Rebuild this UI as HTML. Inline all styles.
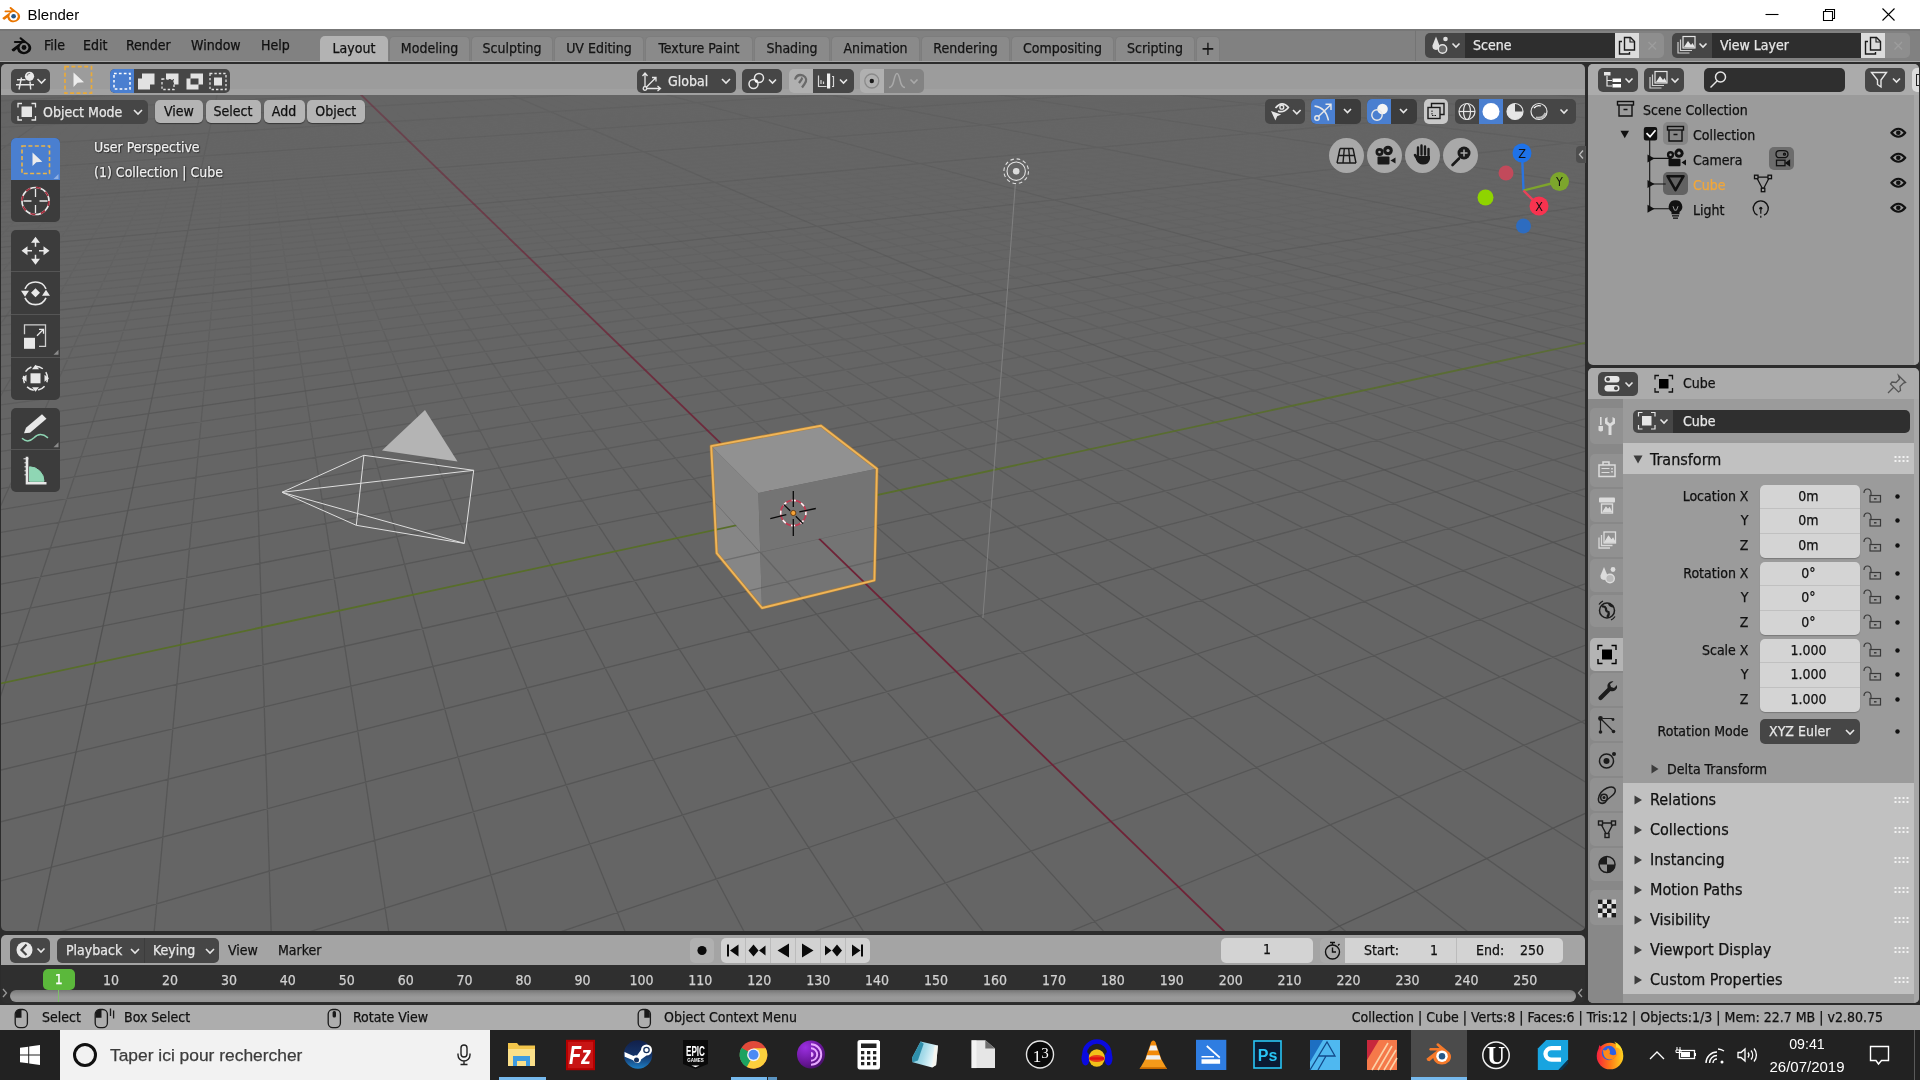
<!DOCTYPE html>
<html lang="en"><head><meta charset="utf-8"><title>Blender</title>
<style>
*{box-sizing:border-box;margin:0;padding:0}
html,body{width:1920px;height:1080px;overflow:hidden;background:#818181}
body{position:relative;font-family:"DejaVu Sans Condensed","DejaVu Sans",sans-serif;font-stretch:condensed;font-size:14px;color:#111;line-height:1}
.a{position:absolute}
.t{position:absolute;white-space:nowrap;line-height:20px;height:20px}
.w{font-family:"Liberation Sans",sans-serif}
.btn{position:absolute;border-radius:5px}
.dk{background:#464646;color:#e6e6e6}
.lt{background:#b2b2b2;color:#111}
svg{position:absolute;overflow:visible}
.c{text-align:center}
.r{text-align:right}
#root{position:absolute;left:0;top:0;width:1920px;height:1080px;will-change:transform;-webkit-text-stroke:.25px}
</style></head><body><div id="root">
<!-- Windows title bar -->
<div class="a" style="left:0;top:0;width:1920px;height:29px;background:#fff"></div>
<svg style="left:1px;top:4.500px" width="21.600" height="19.800" viewBox="0 0 24 22">
 <path d="M1.5 14.5 L10 8 L4.5 8 Q3 7 4.5 6 L12 6 L9.5 3.5 Q9.5 2 11 2.2 L20 9.5 Q22.5 13 20 16.5 Q16 20.5 10.5 18.5 Q7.5 17 7 14 L4 16.5 Q2 16.5 1.5 14.5Z" fill="#ea7600"/>
 <circle cx="14" cy="12.5" r="4.6" fill="#fff"/><circle cx="14" cy="12.5" r="2.6" fill="#265787"/>
</svg>
<div class="t w" style="left:27.500px;top:4.500px;font-size:15px;color:#000;-webkit-text-stroke:0">Blender</div>
<svg style="left:1760px;top:4px" width="140" height="22" viewBox="0 0 140 22" fill="none" stroke="#000" stroke-width="1.1">
 <path d="M5.5 10.5H18.5"/>
 <path d="M63.5 7.5h9v9h-9zM65.5 7.5v-2h9v9h-2"/>
 <path d="M122.5 4.5l12 12M134.500 4.5l-12 12"/>
</svg>
<!-- Blender top bar -->
<div class="a" style="left:0;top:29px;width:1920px;height:33px;background:#818181"></div><div class="a" style="left:0;top:29px;width:1920px;height:1.500px;background:#777"></div>
<div class="a" style="left:0;top:61px;width:1920px;height:1px;background:#a6a6a6"></div>
<div class="a" style="left:0;top:62px;width:1920px;height:2px;background:#2c2c2c"></div>
<svg style="left:10px;top:35px" width="24" height="22" viewBox="0 0 24 22">
 <path d="M1.5 14.5 L10 8 L4.5 8 Q3 7 4.5 6 L12 6 L9.5 3.5 Q9.5 2 11 2.2 L20 9.5 Q22.5 13 20 16.5 Q16 20.5 10.5 18.5 Q7.500 17 7 14 L4 16.5 Q2 16.5 1.5 14.5Z" fill="#0c0c0c"/>
 <circle cx="14" cy="12.5" r="4.4" fill="#818181"/><circle cx="14" cy="12.5" r="2.4" fill="#0c0c0c"/>
</svg>
<div class="t" style="left:44px;top:35px">File</div>
<div class="t" style="left:83px;top:35px">Edit</div>
<div class="t" style="left:126px;top:35px">Render</div>
<div class="t" style="left:191px;top:35px">Window</div>
<div class="t" style="left:261px;top:35px">Help</div>
<!-- workspace tabs -->
<div class="a c" style="left:320px;top:36px;width:68px;height:26px;background:#b3b3b3;border-radius:5px 5px 0 0;line-height:25px">Layout</div>
<div class="a c tab" style="left:389px;width:81px">Modeling</div>
<div class="a c tab" style="left:471px;width:82px">Sculpting</div>
<div class="a c tab" style="left:554px;width:90px">UV Editing</div>
<div class="a c tab" style="left:645px;width:108px">Texture Paint</div>
<div class="a c tab" style="left:754px;width:76px">Shading</div>
<div class="a c tab" style="left:831px;width:89px">Animation</div>
<div class="a c tab" style="left:921px;width:89px">Rendering</div>
<div class="a c tab" style="left:1011px;width:103px">Compositing</div>
<div class="a c tab" style="left:1115px;width:80px">Scripting</div>
<div class="a c tab" style="left:1196px;width:24px;font-size:19px;line-height:22px!important;-webkit-text-stroke:0">+</div>
<style>.tab{top:36px;height:25px;background:#8a8a8a;border:1px solid #7d7d7d;border-bottom:0;line-height:23px!important;border-radius:5px 5px 0 0;line-height:25px;color:#141414}</style>
<!-- scene / view layer -->
<div class="btn dk" style="left:1425px;top:33px;width:40px;height:25px;border-radius:5px 0 0 5px"></div>
<div class="a" style="left:1465px;top:33px;width:150px;height:25px;background:#2e2e2e;color:#e6e6e6;line-height:24px;padding-left:8px">Scene</div>
<div class="a" style="left:1615px;top:33px;width:24px;height:25px;background:#dcdcdc"></div>
<div class="a" style="left:1639px;top:33px;width:25px;height:25px;background:#8e8e8e;border-radius:0 5px 5px 0"></div>
<div class="btn dk" style="left:1672px;top:33px;width:40px;height:25px;border-radius:5px 0 0 5px"></div>
<div class="a" style="left:1712px;top:33px;width:149px;height:25px;background:#2e2e2e;color:#e6e6e6;line-height:24px;padding-left:8px">View Layer</div>
<div class="a" style="left:1861px;top:33px;width:24px;height:25px;background:#dcdcdc"></div>
<div class="a" style="left:1885px;top:33px;width:25px;height:25px;background:#8e8e8e;border-radius:0 5px 5px 0"></div>
<svg style="left:1428px;top:34px" width="36" height="22" viewBox="0 0 36 22" fill="none" stroke="#e6e6e6" stroke-width="1.400"><path d="M8 2.500l3.500 9q.5 4 -3.500 4.500q-4 -.5 -3.500 -4.500z" fill="#e0e0e0" stroke="none"/><circle cx="17.500" cy="5" r="2.300" fill="#e0e0e0" stroke="none"/><circle cx="14.500" cy="15" r="4.200" fill="#6a6a6a"/><path d="M24.500 9.500l3.500 3.500l3.500 -3.500" stroke-width="1.600"/></svg>
<svg style="left:1675px;top:34px" width="36" height="22" viewBox="0 0 36 22" fill="none" stroke="#e6e6e6" stroke-width="1.200"><rect x="8" y="2.500" width="12" height="11.500"/><path d="M9 13l4 -6l3 4l1.500 -2l2 3.500v1z" fill="#e6e6e6" stroke="none"/><path d="M5.500 5.500v11h11.500M3 8v11h11.500" stroke="#cfcfcf"/><path d="M24.500 9.500l3.500 3.500l3.500 -3.500" stroke-width="1.600"/></svg>
<svg style="left:1615px;top:34px" width="50" height="24" viewBox="0 0 50 24" fill="none" stroke="#1a1a1a" stroke-width="1.400"><path d="M9.500 3.500h6l4 4v8.500h-10z"/><path d="M15 3.500v4.500h4.500" stroke-width="1.100"/><path d="M7 7.500h-2.500v12.500h10v-2"/><path d="M33.500 8l7.500 7.500M41 8l-7.500 7.500" stroke="#9d9d9d" stroke-width="1.400"/></svg>
<svg style="left:1861px;top:34px" width="50" height="24" viewBox="0 0 50 24" fill="none" stroke="#1a1a1a" stroke-width="1.400"><path d="M9.500 3.500h6l4 4v8.500h-10z"/><path d="M15 3.500v4.500h4.500" stroke-width="1.100"/><path d="M7 7.500h-2.500v12.500h10v-2"/><path d="M33.500 8l7.500 7.500M41 8l-7.500 7.500" stroke="#9d9d9d" stroke-width="1.400"/></svg>
<div class="a" style="left:1415px;top:30px;width:1px;height:31px;background:#747474"></div>
<!-- 3D viewport -->
<div class="a" style="left:0;top:62px;width:1920px;height:943px;background:#2c2c2c"></div>
<div class="a" style="left:1px;top:64px;width:1584px;height:867px;background:#656565;border-radius:5px"></div>
<svg style="left:0;top:0" width="1586" height="932" viewBox="0 0 1586 932">
<defs>
<linearGradient id="f1" x1="0" y1="96" x2="0" y2="932" gradientUnits="userSpaceOnUse"><stop offset="0" stop-color="#000"/><stop offset="0.08" stop-color="#0a0a0a"/><stop offset="0.25" stop-color="#555"/><stop offset="0.4" stop-color="#aaa"/><stop offset="0.58" stop-color="#fff"/></linearGradient>
<linearGradient id="f10" x1="0" y1="96" x2="0" y2="932" gradientUnits="userSpaceOnUse"><stop offset="0" stop-color="#3a3a3a"/><stop offset="0.35" stop-color="#aaa"/><stop offset="0.6" stop-color="#fff"/></linearGradient>
<mask id="m1" maskUnits="userSpaceOnUse" x="0" y="64" width="1586" height="868"><rect x="0" y="64" width="1586" height="868" fill="url(#f1)"/></mask>
<mask id="m10" maskUnits="userSpaceOnUse" x="0" y="64" width="1586" height="868"><rect x="0" y="64" width="1586" height="868" fill="url(#f10)"/></mask>
<linearGradient id="fax" x1="0" y1="96" x2="0" y2="932" gradientUnits="userSpaceOnUse"><stop offset="0" stop-color="#777"/><stop offset="0.5" stop-color="#fff"/></linearGradient><mask id="max" maskUnits="userSpaceOnUse" x="0" y="64" width="1586" height="868"><rect x="0" y="64" width="1586" height="868" fill="url(#fax)"/></mask>
<clipPath id="vp"><rect x="1" y="64" width="1584" height="867" rx="5"/></clipPath>
<clipPath id="ug"><path clip-rule="evenodd" d="M714.0 500.9 L821.2 479.0 L875.6 525.9 L874.4 580.3 L762.0 608.0 L716.7 553.2Z M714.0 500.9 L821.2 479.0 L875.6 525.9 L760.3 552.1Z"/></clipPath>
<g id="grid"><g id="gl"><g mask="url(#m1)"><path d="M0.0 148.1L1339.1 64.0M0.0 150.2L1360.3 64.0M0.0 152.5L1381.6 64.0M0.0 154.8L1403.0 64.0M0.0 157.1L1424.6 64.0M0.0 159.5L1446.3 64.0M0.0 162.0L1468.2 64.0M0.0 164.5L1490.2 64.0M0.0 167.2L1512.3 64.0M0.0 172.6L1557.1 64.0M0.0 175.5L1579.7 64.0M0.0 178.5L1586.0 65.2M0.0 181.5L1586.0 66.9M0.0 184.6L1586.0 68.6M0.0 187.9L1586.0 70.4M0.0 191.2L1586.0 72.2M0.0 194.7L1586.0 74.1M0.0 198.3L1586.0 76.1M0.0 205.8L1586.0 80.2M0.0 209.8L1586.0 82.4M0.0 213.9L1586.0 84.6M0.0 218.1L1586.0 87.0M0.0 222.5L1586.0 89.4M0.0 227.1L1586.0 91.9M0.0 231.9L1586.0 94.5M0.0 236.9L1586.0 97.3M5.2 64.0L0.0 65.9M0.0 242.0L1586.0 100.1M14.7 64.0L0.0 69.5M0.0 253.0L1586.0 106.1M33.9 64.0L0.0 77.8M0.0 258.8L1586.0 109.3M43.6 64.0L0.0 82.6M0.0 264.9L1586.0 112.7M53.3 64.0L0.0 87.9M0.0 271.3L1586.0 116.2M63.0 64.0L0.0 93.8M0.0 278.0L1586.0 119.8M72.7 64.0L0.0 100.4M0.0 285.0L1586.0 123.7M82.5 64.0L0.0 107.9M0.0 292.3L1586.0 127.7M92.4 64.0L0.0 116.4M0.0 300.0L1586.0 131.9M102.2 64.0L-0.0 126.1M0.0 308.1L1586.0 136.4M112.2 64.0L0.0 137.3M0.0 325.6L1586.0 146.0M132.1 64.0L0.0 165.9M0.0 335.0L1586.0 151.2M142.1 64.0L0.0 184.7M0.0 345.1L1586.0 156.7M152.2 64.0L0.0 207.7M0.0 355.6L1586.0 162.5M162.3 64.0L0.0 236.7M0.0 366.9L1586.0 168.7M172.4 64.0L0.0 274.3M0.0 378.8L1586.0 175.2M182.6 64.0L0.0 324.9M0.0 391.5L1586.0 182.2M192.8 64.0L0.0 396.9M0.0 405.0L1586.0 189.6M203.0 64.0L0.0 507.2M0.0 419.5L1586.0 197.6M213.3 64.0L0.0 697.8M0.0 451.6L1586.0 215.2M234.1 64.0L154.1 932.0M0.0 469.5L1586.0 225.0M244.5 64.0L271.2 932.0M0.0 488.8L1586.0 235.6M254.9 64.0L388.8 932.0M0.0 509.7L1586.0 247.1M265.4 64.0L506.8 932.0M0.0 532.5L1586.0 259.6M276.0 64.0L625.3 932.0M0.0 557.2L1586.0 273.2M286.6 64.0L744.3 932.0M0.0 584.3L1586.0 288.1M297.2 64.0L863.8 932.0M0.0 614.1L1586.0 304.4M307.8 64.0L983.7 932.0M0.0 647.0L1586.0 322.5M318.6 64.0L1104.1 932.0M0.0 724.3L1586.0 365.0M340.1 64.0L1346.3 932.0M0.0 770.2L1586.0 390.1M350.9 64.0L1468.2 932.0M0.0 822.0L1586.0 418.6M361.8 64.0L1586.0 928.8M0.0 881.2L1586.0 451.1M372.7 64.0L1586.0 849.6M59.7 932.0L1586.0 488.5M383.7 64.0L1586.0 782.3M308.8 932.0L1586.0 532.1M394.7 64.0L1586.0 724.4M560.0 932.0L1586.0 583.5M405.8 64.0L1586.0 674.2M813.4 932.0L1586.0 645.0M416.9 64.0L1586.0 630.1M1068.8 932.0L1586.0 719.8M428.0 64.0L1586.0 591.1M450.5 64.0L1586.0 525.3M461.7 64.0L1586.0 497.3M473.1 64.0L1586.0 471.9M484.4 64.0L1586.0 448.8M495.9 64.0L1586.0 427.7M507.3 64.0L1586.0 408.3M518.8 64.0L1586.0 390.5M530.4 64.0L1586.0 374.0M542.0 64.0L1586.0 358.7M565.4 64.0L1586.0 331.3M577.1 64.0L1586.0 319.0M588.9 64.0L1586.0 307.4M600.8 64.0L1586.0 296.6M612.7 64.0L1586.0 286.4M624.7 64.0L1586.0 276.8M636.7 64.0L1586.0 267.8M648.7 64.0L1586.0 259.2M660.8 64.0L1586.0 251.1M685.2 64.0L1586.0 236.2M697.4 64.0L1586.0 229.3M709.8 64.0L1586.0 222.7M722.1 64.0L1586.0 216.4M734.5 64.0L1586.0 210.4M747.0 64.0L1586.0 204.7M759.5 64.0L1586.0 199.3M772.1 64.0L1586.0 194.1M784.7 64.0L1586.0 189.1M810.2 64.0L1586.0 179.7M823.0 64.0L1586.0 175.3M835.8 64.0L1586.0 171.0M848.7 64.0L1586.0 166.9M861.7 64.0L1586.0 163.0M874.7 64.0L1586.0 159.2M887.8 64.0L1586.0 155.6M900.9 64.0L1586.0 152.1M914.1 64.0L1586.0 148.7M940.7 64.0L1586.0 142.2M954.1 64.0L1586.0 139.2M967.5 64.0L1586.0 136.2M981.0 64.0L1586.0 133.4M994.5 64.0L1586.0 130.6M1008.1 64.0L1586.0 127.9M1021.8 64.0L1586.0 125.3M1035.6 64.0L1586.0 122.8M1049.3 64.0L1586.0 120.3" stroke="#565656" stroke-width="1.3" fill="none"/></g>
<g mask="url(#m10)"><path d="M0.0 69.0L124.8 64.0M0.0 75.3L267.3 64.0M-0.0 82.4L417.8 64.0M0.0 90.8L577.1 64.0M0.0 100.8L745.8 64.0M0.0 112.8L924.8 64.0M0.0 127.5L1115.2 64.0M0.0 146.0L1318.1 64.0M0.0 169.9L1534.7 64.0M0.0 202.0L1586.0 78.1M0.0 247.4L1586.0 103.0M24.3 64.0L0.0 73.5M0.0 316.6L1586.0 141.1M122.1 64.0L0.0 150.4M0.0 435.0L1586.0 206.1M223.7 64.0L37.4 932.0M1326.5 932.0L1586.0 813.0M439.2 64.0L1586.0 556.4M553.7 64.0L1586.0 344.5M673.0 64.0L1586.0 243.5M797.4 64.0L1586.0 184.3M927.4 64.0L1586.0 145.4M1063.2 64.0L1586.0 117.9M1205.3 64.0L1586.0 97.5M1354.1 64.0L1586.0 81.7M1510.1 64.0L1586.0 69.1" stroke="#525252" stroke-width="1.3" fill="none"/></g></g>
<g id="ax" mask="url(#max)"><path d="M329.3 64.0L1225.0 932.0" stroke="#6f2337" stroke-width="1.8" fill="none"/><path d="M0.0 683.6L1586.0 342.6" stroke="#586e2a" stroke-width="1.8" fill="none"/></g></g>
</defs>
<g clip-path="url(#vp)">
<use href="#grid"/>
<path d="M1015.4 183.7L982.9 618.1" stroke="#808080" stroke-width="1" fill="none"/>
<circle cx="1016.2" cy="171.2" r="3.3" fill="#dcdcdc"/><circle cx="1016.2" cy="171.2" r="9.2" fill="none" stroke="#e4e4e4" stroke-width="1.1"/><circle cx="1016.2" cy="171.2" r="12.3" fill="none" stroke="#dcdcdc" stroke-width="1.1" stroke-dasharray="3.6 2.85"/>
<path d="M282 492.3L363.9 455.3L473.7 470.3L464.3 543.4L356.3 525.3Z M282 492.3L473.7 470.3 M282 492.3L464.3 543.4 M363.9 455.3L356.3 525.3" stroke="#dedede" stroke-width="1" fill="none" stroke-linejoin="round"/>
<path d="M425 410L382 450.6L457.5 461.6Z" fill="#b4b4b4"/>
<polygon points="711.2,446.1 821.0,425.7 876.9,468.8 758.4,493.1" fill="#919191"/>
<polygon points="711.2,446.1 758.4,493.1 762.0,608.0 716.7,553.2" fill="#868686"/>
<polygon points="758.4,493.1 876.9,468.8 874.4,580.3 762.0,608.0" fill="#747474"/>
<g clip-path="url(#ug)"><use href="#gl" opacity="0.55"/><use href="#ax"/></g>
<polygon points="711.2,446.1 821.0,425.7 876.9,468.8 874.4,580.3 762.0,608.0 716.7,553.2" fill="none" stroke="#b8812f" stroke-width="3.2" stroke-linejoin="round" opacity=".75"/><polygon points="711.2,446.1 821.0,425.7 876.9,468.8 874.4,580.3 762.0,608.0 716.7,553.2" fill="none" stroke="#f0b558" stroke-width="1.9" stroke-linejoin="round"/>
<g transform="translate(793.3 513)"><circle r="12.6" fill="none" stroke="#c23a52" stroke-width="1.6"/><circle r="12.6" fill="none" stroke="#f6f6f6" stroke-width="1.6" stroke-dasharray="4.2 5.7" stroke-dashoffset="2"/><path d="M0 -22V-6M0 6V23M-23 5.600L-7 1.700M6 -1.200L22.500 -4.500M-9.700 -8.600L-3.100 -2.200M2.500 3.300L9.700 10.600" stroke="#0a0a0a" stroke-width="1.300"/><circle r="2.600" fill="#f5a338" stroke="#5a2c00" stroke-width=".8"/></g>
</g></svg>
<!-- tool settings header -->
<div class="a" style="left:1px;top:64px;width:1584px;height:31px;background:#9c9c9c;border-radius:5px 5px 0 0"></div>
<div class="a" style="left:1px;top:89px;width:1584px;height:6px;background:#a1a1a1"></div>
<div class="btn dk" style="left:10.5px;top:68.5px;width:39.5px;height:24.5px"></div>
<svg style="left:10px;top:68px" width="40" height="26" viewBox="10 68 40 26" fill="none" stroke="#e6e6e6" stroke-width="1.400"><path d="M17 79.700H25.500M16 84.800H34M21.500 77.500L19 89.500M30 81.500L30.700 89.500"/><circle cx="29.500" cy="76.300" r="4.600" fill="#e9e9e9" stroke="none"/><path d="M27 75.500q.800 -2.300 3.200 -2.300" stroke="#777" stroke-width="1.100"/><path d="M37.500 79l4 4l4 -4" stroke-width="1.600"/></svg>
<svg style="left:63px;top:65px" width="30" height="30" viewBox="0 0 30 30"><rect x="2" y="1.700" width="26.500" height="26.500" fill="none" stroke="#e9aa3a" stroke-width="1.7" stroke-dasharray="4 2.400"/><path d="M10.500 7.500V22l4 -4.200l6.500 -.6z" fill="#ececec"/></svg>
<div class="a" style="left:109.500px;top:68.5px;width:120px;height:24.5px;border-radius:5px;background:#464646;overflow:hidden"><div class="a" style="left:0;top:0;width:24px;height:25px;background:#4a7fd0"></div></div>
<svg style="left:109.500px;top:68.5px" width="120" height="25" viewBox="0 0 120 25">
 <rect x="4" y="4.500" width="16" height="15.500" fill="none" stroke="#fff" stroke-width="1.500" stroke-dasharray="2.700 2.200"/>
 <path d="M32 4.500h12.500v11h-4.500v5h-12v-11h4z" fill="#e2e2e2"/>
 <path d="M56 4.500h12.500v11h-4.500v-5.500h-8z" fill="#e2e2e2"/><rect x="52" y="10" width="12" height="10.500" fill="none" stroke="#e2e2e2" stroke-width="1.300" stroke-dasharray="2.400 2"/>
 <path d="M80.500 4.500h12.500v11h-4.500v5h-12v-11h4z" fill="#e2e2e2"/><rect x="80.500" y="9.500" width="8" height="6" fill="#464646"/>
 <rect x="100" y="4.500" width="16" height="16" fill="none" stroke="#e2e2e2" stroke-width="1.300" stroke-dasharray="2.400 2"/><rect x="104" y="8.500" width="8" height="8" fill="#e2e2e2"/>
</svg>
<!-- transform orientation etc -->
<div class="btn dk" style="left:636.5px;top:68.5px;width:99.5px;height:24.5px"></div>
<svg style="left:640px;top:70px" width="24" height="22" viewBox="0 0 24 22" fill="none" stroke="#e6e6e6" stroke-width="1.300"><path d="M5 18.500V3M2.500 6L5 3l2.500 3M5 18.500H20.500M17.500 16l3 2.500l-3 2.500M6 17.500L16 7.500M12 7.500h4v4"/><circle cx="5" cy="18.500" r="1.800" fill="#464646"/></svg>
<div class="t" style="left:668px;top:70.5px;color:#e6e6e6">Global</div>
<svg style="left:720px;top:76px" width="12" height="10" viewBox="0 0 12 10" fill="none" stroke="#e6e6e6" stroke-width="1.600"><path d="M2 3l4 4l4 -4"/></svg>
<div class="btn dk" style="left:742px;top:68.5px;width:40px;height:24.5px"></div>
<svg style="left:745px;top:70px" width="36" height="22" viewBox="0 0 36 22" fill="none" stroke="#e6e6e6" stroke-width="1.500"><circle cx="8.500" cy="14" r="4.500"/><circle cx="14" cy="8" r="4.500"/><circle cx="11.300" cy="11" r="1.500" fill="#fff" stroke="none"/><path d="M24 9.500l3.500 3.500l3.500 -3.500" stroke-width="1.600"/></svg>
<div class="btn" style="left:789px;top:68.5px;width:23.5px;height:24.5px;background:#b0b0b0;border-radius:5px 0 0 5px"></div>
<svg style="left:790px;top:70px" width="22" height="22" viewBox="0 0 22 22" fill="none" stroke="#6a6a6a" stroke-width="2.200"><path d="M5 9.500Q7 3.500 13 5.500Q18.500 8.500 14.500 14l-2.500 3.500M9 13l2.500 -3.500Q12.500 8.500 11 8"/></svg>
<div class="btn dk" style="left:812.5px;top:68.5px;width:41px;height:24.5px;border-radius:0 5px 5px 0"></div>
<svg style="left:815px;top:70px" width="38" height="22" viewBox="0 0 38 22" fill="none" stroke="#d8d8d8" stroke-width="1.200"><path d="M3.500 5.500v11h8M6 14v-4M8.500 14v-2.500M17 6.500h1.500v10H17"/><rect x="12" y="3.500" width="3.200" height="15" fill="#f2f2f2" stroke="none"/><path d="M25 9.500l3.500 3.500l3.500 -3.500" stroke-width="1.600" stroke="#e6e6e6"/></svg>
<div class="btn" style="left:859.500px;top:68.5px;width:24px;height:24.5px;background:#b0b0b0;border-radius:5px 0 0 5px"></div>
<svg style="left:860px;top:69px" width="24" height="24" viewBox="0 0 24 24"><circle cx="11.800" cy="12" r="7" fill="none" stroke="#8a8a8a" stroke-width="1.300"/><circle cx="11.800" cy="12" r="2.200" fill="#1a1a1a"/></svg>
<div class="btn" style="left:883.5px;top:68.5px;width:40.500px;height:24.5px;background:#838383;border-radius:0 5px 5px 0"></div>
<svg style="left:886px;top:70px" width="38" height="22" viewBox="0 0 38 22" fill="none" stroke="#a9a9a9" stroke-width="1.500"><path d="M3 17.500Q6.500 17.500 8 10Q9.500 3.500 11 3.500Q12.500 3.500 14 10Q15.500 17.500 19 17.500"/><path d="M24.500 9.500l3.500 3.500l3.500 -3.500" stroke-width="1.600"/></svg>
<!-- 3D view header -->
<div class="btn dk" style="left:11px;top:99.500px;width:136.500px;height:24.5px"></div>
<svg style="left:16px;top:101px" width="22" height="22" viewBox="0 0 22 22" fill="none" stroke="#e6e6e6" stroke-width="1.300"><rect x="5.500" y="5.500" width="10.500" height="10.500" fill="#e6e6e6" stroke="none"/><path d="M2 6.500V2.500h4M15.500 2.500h4v4M19.500 15v4h-4M6 19H2v-4"/></svg>
<div class="t" style="left:43px;top:101.5px;color:#e6e6e6">Object Mode</div>
<svg style="left:132px;top:107px" width="12" height="10" viewBox="0 0 12 10" fill="none" stroke="#e6e6e6" stroke-width="1.600"><path d="M2 3l4 4l4 -4"/></svg>
<div class="btn lt c hb" style="left:155px;width:48px">View</div>
<div class="btn lt c hb" style="left:205.5px;width:55px">Select</div>
<div class="btn lt c hb" style="left:263.5px;width:41px">Add</div>
<div class="btn lt c hb" style="left:307px;width:57.500px">Object</div>
<style>.hb{top:100px;height:23.300px;line-height:23.500px;background:#b4b4b4;box-shadow:0 1px 1px rgba(0,0,0,.45)}</style>
<div class="t ov" style="left:94px;top:137px">User Perspective</div>
<div class="t ov" style="left:94px;top:162px">(1) Collection | Cube</div>
<style>.ov{color:#f0f0f0;text-shadow:0 0 2px rgba(0,0,0,.8),1px 1px 1px rgba(0,0,0,.5)}</style>
<!-- viewport header right -->
<div class="btn dk" style="left:1265px;top:99px;width:40px;height:24.5px"></div>
<svg style="left:1265px;top:99px" width="40" height="25" viewBox="1265 99 40 25" fill="none" stroke="#e6e6e6" stroke-width="1.700"><path d="M1275.500 108q6.500 -8 13 -.5q-5.500 6 -10.500 3.500" stroke-linejoin="round"/><circle cx="1281.800" cy="107.200" r="1.900" stroke-width="1.400"/><path d="M1271 111l10.200 3.400l-4 1.800l-1.800 4.300z" fill="#e6e6e6" stroke="none"/><path d="M1293 110l3.800 3.800l3.800 -3.800" stroke-width="1.600"/></svg>
<div class="btn dk" style="left:1311px;top:99px;width:50px;height:24.5px;overflow:hidden;background:#3c3c3c"><div class="a" style="left:0;top:0;width:24px;height:25px;background:#4a7fd0"></div></div>
<svg style="left:1311px;top:100px" width="50" height="22" viewBox="0 0 50 22" fill="none" stroke="#e8e8e8" stroke-width="1.400"><circle cx="6" cy="18" r="2.200"/><path d="M7.700 16.300L19.500 5M14.500 4.300h5.500V10M3.500 6Q15 7.500 17.500 20.500"/><path d="M33 9l3.500 3.500l3.500 -3.500" stroke-width="1.600"/></svg>
<div class="btn dk" style="left:1367px;top:99px;width:50px;height:24.5px;overflow:hidden;background:#3c3c3c"><div class="a" style="left:0;top:0;width:24px;height:25px;background:#4a7fd0"></div></div>
<svg style="left:1367px;top:100px" width="50" height="22" viewBox="0 0 50 22" fill="none" stroke="#e8e8e8" stroke-width="1.400"><circle cx="15.500" cy="9" r="5.300" fill="#f4f4f4" stroke="none"/><circle cx="10" cy="15" r="5.200"/><path d="M33 9l3.500 3.500l3.500 -3.500" stroke-width="1.600"/></svg>
<div class="btn" style="left:1423.5px;top:99px;width:24.5px;height:24.5px;background:#c8c8c8"></div>
<svg style="left:1424px;top:100px" width="24" height="22" viewBox="0 0 24 22" fill="none" stroke="#1a1a1a" stroke-width="1.400"><rect x="4" y="7.500" width="12" height="11"/><path d="M7.500 7.500V3.500h12.500v11h-4"/><path d="M8 10.500v5h5" stroke-width="1" stroke-dasharray="1.500 1"/></svg>
<div class="btn dk" style="left:1454.5px;top:99px;width:121.500px;height:24.5px;overflow:hidden"><div class="a" style="left:24px;top:0;width:24.5px;height:25px;background:#4a7fd0"></div></div>
<svg style="left:1454.5px;top:99px" width="122" height="25" viewBox="0 0 122 25" fill="none" stroke="#e6e6e6" stroke-width="1.200"><circle cx="12" cy="12.500" r="8"/><ellipse cx="12" cy="12.500" rx="3.500" ry="8"/><path d="M4 12.500H20"/><circle cx="36" cy="12.500" r="8.500" fill="#fff" stroke="none"/><circle cx="60" cy="12.500" r="8"/><path d="M60 4.500A8 8 0 0 0 54.500 18.300L60 12.500Z M60 12.500h8A8 8 0 0 1 54.500 18.300z" fill="#e6e6e6" stroke="none"/><circle cx="84" cy="12.500" r="8"/><path d="M79 9Q82 5.500 86 7" stroke="#fff"/><path d="M90.500 14Q88 20 81 18.500" stroke="#bbb" stroke-width="2"/><path d="M105.500 10.500l3.500 3.500l3.500 -3.500" stroke-width="1.600"/></svg>
<!-- nav buttons -->
<div class="a nv" style="left:1328.500px"></div><div class="a nv" style="left:1366.500px"></div><div class="a nv" style="left:1404.500px"></div><div class="a nv" style="left:1442.500px"></div>
<style>.nv{top:138px;width:35px;height:35px;border-radius:50%;background:#a9a9a9}</style>
<svg style="left:1328.500px;top:138px" width="150" height="35" viewBox="0 0 150 35" fill="none" stroke="#1a1a1a" stroke-width="1.400">
 <path d="M11 10.500h13M9.500 17.500h16M8 25h19M11 10.500L8 25M24 10.500L27 25M15.300 10.500L14 25M19.700 10.500L21 25"/>
 <g fill="#1a1a1a" stroke="none"><circle cx="50.500" cy="14" r="4"/><circle cx="59" cy="12.500" r="4.800"/><rect x="48.500" y="18.500" width="12" height="8" rx="1"/><path d="M61.500 22.500l5 -3v6z"/><circle cx="50.500" cy="14" r="1.300" fill="#a9a9a9"/><circle cx="59" cy="12.500" r="1.600" fill="#a9a9a9"/></g>
 <g stroke-width="2.400" stroke-linecap="round"><path d="M89 17.500V9.500M92.500 16.500V7.500M96 16.500V8.500M99.500 17.500V11"/><path d="M86 17l2.500 4" stroke-width="2.600"/></g><path d="M87.500 18h13.500v3q-1 5.500 -7 5.500q-5 0 -7 -5z" fill="#1a1a1a" stroke="none"/>
 <circle cx="135" cy="15" r="6.500" fill="#1a1a1a" stroke="none"/><path d="M130 20.500L123.500 27" stroke-width="2.600" stroke-linecap="round"/><path d="M131.500 15h7M135 11.500v7" stroke="#a9a9a9" stroke-width="1.500"/>
</svg>
<!-- axis gizmo -->
<svg style="left:1470px;top:135px" width="110" height="110" viewBox="1470 135 110 110">
 <circle cx="1506" cy="173" r="7.500" fill="#c24a5b"/><circle cx="1523.500" cy="226" r="7.500" fill="#2d6cc0"/>
 <path d="M1523.500 190.500L1522 153" stroke="#2a74e0" stroke-width="2.400"/><path d="M1523.500 190.500L1559.500 181.500" stroke="#7ea42c" stroke-width="2.400"/><path d="M1523.500 190.500L1539 206" stroke="#e8435a" stroke-width="2.400"/>
 <circle cx="1485.500" cy="197.500" r="8" fill="#8fd400"/>
 <circle cx="1522" cy="153" r="9.500" fill="#1e72e8"/><circle cx="1559.500" cy="181.500" r="9.500" fill="#7ca62c"/><circle cx="1539" cy="206" r="9.500" fill="#f8334f"/>
 <g font-family="DejaVu Sans,sans-serif" font-size="12.500" fill="#101010" text-anchor="middle"><text x="1522" y="157.500">Z</text><text x="1559.500" y="186">Y</text><text x="1539" y="210.500">X</text></g>
</svg>
<div class="a" style="left:1575.500px;top:146px;width:10px;height:17px;background:#4e4e4e;border-radius:4px 0 0 4px"></div>
<svg style="left:1575.500px;top:146px" width="10" height="17" viewBox="0 0 10 17" fill="none" stroke="#bbb" stroke-width="1.300"><path d="M7 4.500L3.500 8.500L7 12.500"/></svg>
<!-- left toolbar -->
<div class="a tb" style="top:138px;height:84px"><div class="a" style="left:0;top:0;width:49px;height:42px;background:#4a7fd0"></div></div>
<div class="a tb" style="top:230px;height:170px"></div>
<div class="a tb" style="top:408px;height:84px"></div>
<style>.tb{left:10.500px;width:49px;border-radius:5px;background:#3c3c3c;overflow:hidden}.tl{left:10.500px;width:49px;height:1px;background:#555}</style>
<div class="a tl" style="top:271px"></div><div class="a tl" style="top:314px"></div><div class="a tl" style="top:356.500px"></div><div class="a tl" style="top:449px"></div>
<svg style="left:10.500px;top:138px" width="49" height="355" viewBox="0 0 49 355" fill="none" stroke="#e8e8e8" stroke-width="1.500">
 <rect x="11" y="8" width="27.500" height="27.500" stroke="#e9b44a" stroke-width="1.600" stroke-dasharray="4 2.400"/><path d="M21.500 14.500V28l3.800 -3.800l6 -.5z" fill="#ececec" stroke="none"/><path d="M47.500 36v5h-5z" fill="#8fb0e4" stroke="none"/>
 <circle cx="24.500" cy="63" r="13.500" stroke="#e8e8e8" stroke-width="1.700"/><circle cx="24.500" cy="63" r="13.500" stroke="#a62c3c" stroke-width="1.700" stroke-dasharray="5 5.600"/><path d="M24.500 51v8M24.500 67v8M12.500 63h8M28.500 63h8" stroke-width="1.300"/>
 <g transform="translate(0 -1.200)"><g fill="#e8e8e8" stroke="none"><path d="M24.500 100l4.500 6h-9zM24.500 128l4.500 -6h-9zM10.500 114l6 -4.500v9zM38.500 114l-6 -4.500v9z"/></g><path d="M24.500 105v5M24.500 118v5M16 114h5M28 114h5"/>
 <path d="M14 152A11.500 11.500 0 0 1 35 152M35 161A11.500 11.500 0 0 1 14 161" stroke-width="1.600"/><g fill="#e8e8e8" stroke="none"><path d="M10 154h8l-4 6zM31 159h8l-4 -6zM24.500 151.500l4.500 4.500l-4.500 4.500l-4.500 -4.500z" /></g>
 <rect x="13" y="201" width="11" height="11" fill="#e8e8e8" stroke="none"/><path d="M13.500 197.500V188h21v21.500H28" stroke-width="1.300" stroke="#cfcfcf"/><path d="M26 199l6 -6M28 192.500h4.500V197" stroke-width="1.300"/><path d="M47.500 213v5h-5z" fill="#8a8a8a" stroke="none"/>
 <rect x="19.500" y="236.500" width="10" height="10" fill="#e8e8e8" stroke="none"/><circle cx="24.500" cy="241.500" r="12" stroke-width="1.500" stroke-dasharray="7.500 4.500" stroke-dashoffset="3.500"/><g fill="#e8e8e8" stroke="none"><path d="M24.500 228l3.500 4.500h-7zM24.500 255l3.500 -4.500h-7zM11 241.500l4.500 -3.500v7zM38 241.500l-4.500 -3.500v7z"/></g>
 <path d="M11 301.500Q17 307 23 301Q29 294.500 37 301" stroke="#8fd6b4" stroke-width="1.500"/><path d="M13 296.500l2 -5.500L31 277.500l4.500 4.500L19 296z" fill="#e8e8e8" stroke="none"/><path d="M47.500 305.500v5h-5z" fill="#8a8a8a" stroke="none"/>
 <path d="M16 320v26.500h19.500" stroke-width="2.600"/><path d="M18.500 344.500V330A14.500 14.500 0 0 1 33 344.500z" fill="#8fd6b4" stroke="#8fd6b4" stroke-width="1"/><path d="M12.500 322h5M13.500 326h3M13.500 330h3M13.500 334h3M13.500 338h3" stroke-width="1"/></g>
</svg>
<!-- outliner -->
<div class="a" style="left:1588px;top:64px;width:1331px;height:301px;width:331px;background:#9b9b9b;border-radius:5px"></div>
<div class="a" style="left:1588px;top:64px;width:331px;height:31px;background:#ababab;border-radius:5px 5px 0 0"></div>
<div class="a" style="left:1914px;top:95px;width:5px;height:270px;background:#a7a7a7;border-radius:0 0 5px 0"></div>
<div class="btn dk" style="left:1598px;top:67.5px;width:39.500px;height:24.5px"></div>
<svg style="left:1601px;top:69px" width="36" height="22" viewBox="0 0 36 22" fill="none" stroke="#e6e6e6" stroke-width="1.200"><rect x="3" y="3" width="6.500" height="3.500" fill="#e6e6e6" stroke="none"/><rect x="11.500" y="9.500" width="8.500" height="3.500" fill="#fff" stroke="none"/><rect x="11.500" y="15" width="8.500" height="3.500" fill="#fff" stroke="none"/><path d="M6 7v10h5M6 11.500h5"/><path d="M24.500 9.500l3.500 3.500l3.500 -3.500" stroke-width="1.600"/></svg>
<div class="btn dk" style="left:1644px;top:67.5px;width:40px;height:24.5px"></div>
<svg style="left:1647px;top:69px" width="36" height="22" viewBox="0 0 36 22" fill="none" stroke="#e6e6e6" stroke-width="1.200"><rect x="8" y="2.500" width="12" height="11.500"/><path d="M9 13l4 -6l3 4l1.500 -2l2 3.500v1z" fill="#e6e6e6" stroke="none"/><path d="M5.500 5.500v11h11.500M3 8v11h11.500" stroke="#cfcfcf"/><path d="M24.500 9.500l3.500 3.500l3.500 -3.500" stroke-width="1.600"/></svg>
<div class="btn" style="left:1704px;top:67.5px;width:141px;height:24.5px;background:#2f2f2f"></div>
<svg style="left:1707px;top:69px" width="24" height="22" viewBox="0 0 24 22" fill="none" stroke="#e6e6e6" stroke-width="1.500"><circle cx="13.500" cy="8" r="5"/><path d="M10 12L3.500 18.500"/></svg>
<div class="btn dk" style="left:1865px;top:67.5px;width:40px;height:24.5px"></div>
<svg style="left:1868px;top:69px" width="36" height="22" viewBox="0 0 36 22" fill="none" stroke="#e6e6e6" stroke-width="1.400"><path d="M3.500 3.500h15l-5.500 7.500v7l-3.500 -2.500v-4.500z"/><path d="M25 9.500l3.500 3.500l3.500 -3.500" stroke-width="1.600"/></svg>
<div class="a" style="left:1912px;top:67.5px;width:7px;height:24.5px;background:#dcdcdc;border-radius:5px 0 0 5px"></div>
<div class="a" style="left:1916px;top:74px;width:3px;height:12px;border:1.300px solid #222;border-right:0"></div>
<!-- rows -->
<div class="t" style="left:1643px;top:100px">Scene Collection</div>
<div class="t" style="left:1693px;top:125px">Collection</div>
<div class="t" style="left:1693px;top:150px">Camera</div>
<div class="t" style="left:1693px;top:175px;color:#f1a73a">Cube</div>
<div class="t" style="left:1693px;top:200px">Light</div>
<div class="a" style="left:1663px;top:122px;width:25px;height:23px;border-radius:5px;background:#868686"></div>
<div class="a" style="left:1663px;top:172px;width:25px;height:23px;border-radius:5px;background:#626262"></div>
<div class="a" style="left:1769px;top:147px;width:25px;height:23px;border-radius:5px;background:#6c6c6c"></div>
<svg style="left:1588px;top:95px" width="331" height="130" viewBox="1588 95 331 130" fill="none" stroke="#111" stroke-width="1.400"><g transform="translate(0 -1.300)">
 <!-- scene collection icon -->
 <rect x="1617.500" y="102.800" width="16" height="3.500"/><path d="M1619 106.300v11h13v-11M1623.500 110.800h4" />
 <!-- collection -->
 <path d="M1620.500 132h8.500l-4.250 7.500z" fill="#111" stroke="none"/>
 <rect x="1644.500" y="129" width="12" height="12" rx="1.500" fill="#111" stroke="#111"/><path d="M1646.500 134.500l3.500 3.500l5.500 -6.500" stroke="#fff" stroke-width="1.700"/>
 <rect x="1667.500" y="127.800" width="16" height="3.500"/><path d="M1669 131.300v11h13v-11M1673.500 135.800h4"/>
 <!-- tree lines -->
 <path d="M1649.700 141v69.500M1649.700 159.700h22M1649.700 185.300h16M1649.700 210h22" stroke-width="1.100"/>
 <g fill="#111" stroke="none"><path d="M1647.500 155.700l7 4l-7 4zM1647.500 181.300l7 4l-7 4zM1647.500 206l7 4l-7 4z"/></g>
 <!-- camera icon -->
 <g fill="#111" stroke="none"><circle cx="1670.500" cy="156" r="3.600"/><circle cx="1679" cy="154.500" r="4.600"/><rect x="1668.500" y="160" width="12" height="7.500" rx="1"/><path d="M1681.500 163.800l4.500 -3v6z"/><circle cx="1670.500" cy="156" r="1.200" fill="#9b9b9b"/><circle cx="1679" cy="154.500" r="1.600" fill="#9b9b9b"/></g>
 <g stroke="#111" stroke-width="1.300"><path d="M1776 155.500q0 -3.500 3.500 -3.500h4q4.500 0 4.500 3.500q0 3.500 -4.500 3.500h-4q-3.500 0 -3.500 -3.500z"/><circle cx="1784.500" cy="155.500" r="1"/><rect x="1776.500" y="161.500" width="8.500" height="5.500"/><path d="M1786 164.300l3.500 -2.500v5z" fill="#111"/></g>
 <!-- cube mesh icon -->
 <path d="M1667.500 177.500h16l-8 14z" stroke-width="2.600" stroke-linejoin="round"/>
 <g stroke-width="1.300"><path d="M1756.500 178.500h13l-6.500 12.500z"/><rect x="1754.500" y="176.500" width="3.500" height="3.500" fill="#9b9b9b"/><rect x="1768" y="176.500" width="3.500" height="3.500" fill="#9b9b9b"/><rect x="1761.300" y="189.500" width="3.500" height="3.500" fill="#9b9b9b"/></g>
 <!-- light icon -->
 <g fill="#111" stroke="none"><path d="M1675.500 201.500a6.500 6.500 0 0 1 4 11.800v2.200h-8v-2.200a6.500 6.500 0 0 1 4 -11.800z"/><rect x="1672" y="216.500" width="7" height="1.300"/><rect x="1673" y="218.800" width="5" height="1.300"/></g><path d="M1673 207.500l1.500 4h2l1.500 -4" stroke="#999" stroke-width="1"/>
 <path d="M1757.500 216.500a7.500 7.500 0 1 1 6.500 0" stroke-width="1.300"/><circle cx="1760.800" cy="209.500" r="1.500" fill="#111" stroke="none"/><path d="M1760.800 211v4M1760.800 217v2" stroke-width="1.200"/>
 <!-- eyes -->
 <g id="eye"><path d="M1891.300 134q7 -8 14 0q-7 8 -14 0z" stroke-width="2.100" stroke-linejoin="round"/><circle cx="1898.300" cy="134" r="2.300" fill="#111" stroke="none"/></g>
 <use href="#eye" y="25"/><use href="#eye" y="50"/><use href="#eye" y="75"/>
</g></svg>
<!-- properties editor -->
<div class="a" style="left:1588px;top:368px;width:331px;height:635px;background:#9b9b9b;border-radius:5px"></div>
<div class="a" style="left:1588px;top:368px;width:331px;height:31px;background:#ababab;border-radius:5px 5px 0 0"></div>
<div class="a" style="left:1588px;top:399px;width:35px;height:604px;background:#888;border-radius:0 0 0 5px"></div>
<div class="a" style="left:1914px;top:399px;width:5px;height:604px;background:#a7a7a7;border-radius:0 0 5px 0"></div>
<div class="btn dk" style="left:1598px;top:371.5px;width:39.500px;height:24.5px"></div>
<svg style="left:1601px;top:373px" width="36" height="22" viewBox="0 0 36 22" fill="none" stroke="#e6e6e6" stroke-width="1.400"><rect x="3.500" y="3" width="15" height="6.500" rx="3.200" fill="#e6e6e6" stroke="none"/><circle cx="7" cy="6.200" r="2" fill="#464646" stroke="none"/><rect x="3.500" y="12" width="15" height="6.500" rx="3.200" fill="#e6e6e6" stroke="none"/><circle cx="15" cy="15.200" r="2" fill="#464646" stroke="none"/><path d="M24.500 9.500l3.500 3.500l3.500 -3.500" stroke-width="1.600"/></svg>
<svg style="left:1653px;top:373px" width="22" height="22" viewBox="0 0 22 22" fill="none" stroke="#111" stroke-width="1.300"><rect x="6" y="6" width="9.500" height="9.500" fill="#000" stroke="none"/><path d="M2 6.500V2.500h4M15.500 2.500h4v4M19.500 15v4h-4M6 19H2v-4"/></svg>
<div class="t" style="left:1683px;top:373px">Cube</div>
<svg style="left:1885px;top:372px" width="24" height="24" viewBox="0 0 24 24" fill="none" stroke="#555" stroke-width="1.300"><path d="M13.500 3.500l7 7l-2 .5l-3.500 3.500l.5 4l-2 1.500l-8 -8l1.500 -2l4 .500l3.500 -3.500zM8.500 15.500L3 21"/></svg>
<div class="btn dk" style="left:1633px;top:409.500px;width:39.500px;height:23.500px;border-radius:5px 0 0 5px"></div>
<div class="a" style="left:1672.500px;top:409.500px;width:237px;height:23.500px;background:#2f2f2f;border-radius:0 5px 5px 0;color:#e6e6e6;line-height:22px;padding-left:10.500px">Cube</div>
<svg style="left:1636px;top:410px" width="36" height="22" viewBox="0 0 36 22" fill="none" stroke="#e6e6e6" stroke-width="1.200"><rect x="6" y="6" width="9.500" height="9.500" fill="#e6e6e6" stroke="none"/><path d="M2.500 6.500V2.500h4M15 2.500h4v4M19 15v4h-4M6.500 19h-4v-4"/><path d="M24.500 9.500l3.500 3.500l3.500 -3.500" stroke-width="1.600"/></svg>
<div class="a" style="left:1623px;top:443px;width:291px;height:31px;background:#c1c1c1"></div>
<div class="t" style="left:1650px;top:449.5px;font-size:16px">Transform</div>
<svg style="left:1632px;top:453px" width="12" height="12" viewBox="0 0 12 12"><path d="M1.500 2.500h9l-4.500 8z" fill="#3c3c3c"/></svg>
<svg style="left:1893px;top:455px" width="18" height="8" viewBox="0 0 18 8" fill="#f2f2f2"><path d="M0 1h2v2h-2zM4 1h2v2h-2zM8 1h2v2h-2zM12 1h2v2h-2zM0 5h2v2h-2zM4 5h2v2h-2zM8 5h2v2h-2zM12 5h2v2h-2z" transform="translate(1.500 0)"/></svg>
<div class="a" style="left:1759.500px;top:484.5px;width:100px;height:73.500px;background:#d4d4d4;border-radius:5px;box-shadow:0 1px 1px rgba(0,0,0,.22)"></div>
<div class="a" style="left:1759.500px;top:508px;width:100px;height:1px;background:#c0c0c0"></div>
<div class="a" style="left:1759.500px;top:532.5px;width:100px;height:1px;background:#c0c0c0"></div>
<div class="a" style="left:1759.500px;top:561.5px;width:100px;height:73.500px;background:#d4d4d4;border-radius:5px;box-shadow:0 1px 1px rgba(0,0,0,.22)"></div>
<div class="a" style="left:1759.500px;top:585px;width:100px;height:1px;background:#c0c0c0"></div>
<div class="a" style="left:1759.500px;top:609.5px;width:100px;height:1px;background:#c0c0c0"></div>
<div class="a" style="left:1759.500px;top:638.5px;width:100px;height:73.500px;background:#d4d4d4;border-radius:5px;box-shadow:0 1px 1px rgba(0,0,0,.22)"></div>
<div class="a" style="left:1759.500px;top:662px;width:100px;height:1px;background:#c0c0c0"></div>
<div class="a" style="left:1759.500px;top:686.5px;width:100px;height:1px;background:#c0c0c0"></div>
<div class="t r" style="left:1628px;width:120.500px;top:486px">Location X</div>
<div class="t c" style="left:1758.500px;width:100px;top:486px">0m</div>
<svg style="left:1861px;top:485.5px" width="44" height="20" viewBox="0 0 44 20" fill="none" stroke="#3a3a3a" stroke-width="1.200"><path d="M3 7q0 -4 3.500 -4q3 0 3.500 3.500v3.500"/><rect x="9" y="9.500" width="10.500" height="6.500"/><path d="M13 12.800h2.500" stroke-width="1.500"/><circle cx="36.500" cy="10.500" r="2.200" fill="#111" stroke="none"/></svg>
<div class="t r" style="left:1628px;width:120.500px;top:510px">Y</div>
<div class="t c" style="left:1758.500px;width:100px;top:510px">0m</div>
<svg style="left:1861px;top:509.5px" width="44" height="20" viewBox="0 0 44 20" fill="none" stroke="#3a3a3a" stroke-width="1.200"><path d="M3 7q0 -4 3.500 -4q3 0 3.500 3.500v3.500"/><rect x="9" y="9.500" width="10.500" height="6.500"/><path d="M13 12.800h2.500" stroke-width="1.500"/><circle cx="36.500" cy="10.500" r="2.200" fill="#111" stroke="none"/></svg>
<div class="t r" style="left:1628px;width:120.500px;top:535px">Z</div>
<div class="t c" style="left:1758.500px;width:100px;top:535px">0m</div>
<svg style="left:1861px;top:534.5px" width="44" height="20" viewBox="0 0 44 20" fill="none" stroke="#3a3a3a" stroke-width="1.200"><path d="M3 7q0 -4 3.500 -4q3 0 3.500 3.500v3.500"/><rect x="9" y="9.500" width="10.500" height="6.500"/><path d="M13 12.800h2.500" stroke-width="1.500"/><circle cx="36.500" cy="10.500" r="2.200" fill="#111" stroke="none"/></svg>
<div class="t r" style="left:1628px;width:120.500px;top:563px">Rotation X</div>
<div class="t c" style="left:1758.500px;width:100px;top:563px">0°</div>
<svg style="left:1861px;top:562.5px" width="44" height="20" viewBox="0 0 44 20" fill="none" stroke="#3a3a3a" stroke-width="1.200"><path d="M3 7q0 -4 3.500 -4q3 0 3.500 3.500v3.500"/><rect x="9" y="9.500" width="10.500" height="6.500"/><path d="M13 12.800h2.500" stroke-width="1.500"/><circle cx="36.500" cy="10.500" r="2.200" fill="#111" stroke="none"/></svg>
<div class="t r" style="left:1628px;width:120.500px;top:587px">Y</div>
<div class="t c" style="left:1758.500px;width:100px;top:587px">0°</div>
<svg style="left:1861px;top:586.5px" width="44" height="20" viewBox="0 0 44 20" fill="none" stroke="#3a3a3a" stroke-width="1.200"><path d="M3 7q0 -4 3.500 -4q3 0 3.500 3.500v3.500"/><rect x="9" y="9.500" width="10.500" height="6.500"/><path d="M13 12.800h2.500" stroke-width="1.500"/><circle cx="36.500" cy="10.500" r="2.200" fill="#111" stroke="none"/></svg>
<div class="t r" style="left:1628px;width:120.500px;top:612px">Z</div>
<div class="t c" style="left:1758.500px;width:100px;top:612px">0°</div>
<svg style="left:1861px;top:611.5px" width="44" height="20" viewBox="0 0 44 20" fill="none" stroke="#3a3a3a" stroke-width="1.200"><path d="M3 7q0 -4 3.500 -4q3 0 3.500 3.500v3.500"/><rect x="9" y="9.500" width="10.500" height="6.500"/><path d="M13 12.800h2.500" stroke-width="1.500"/><circle cx="36.500" cy="10.500" r="2.200" fill="#111" stroke="none"/></svg>
<div class="t r" style="left:1628px;width:120.500px;top:640px">Scale X</div>
<div class="t c" style="left:1758.500px;width:100px;top:640px">1.000</div>
<svg style="left:1861px;top:639.5px" width="44" height="20" viewBox="0 0 44 20" fill="none" stroke="#3a3a3a" stroke-width="1.200"><path d="M3 7q0 -4 3.500 -4q3 0 3.500 3.500v3.500"/><rect x="9" y="9.500" width="10.500" height="6.500"/><path d="M13 12.800h2.500" stroke-width="1.500"/><circle cx="36.500" cy="10.500" r="2.200" fill="#111" stroke="none"/></svg>
<div class="t r" style="left:1628px;width:120.500px;top:664px">Y</div>
<div class="t c" style="left:1758.500px;width:100px;top:664px">1.000</div>
<svg style="left:1861px;top:663.5px" width="44" height="20" viewBox="0 0 44 20" fill="none" stroke="#3a3a3a" stroke-width="1.200"><path d="M3 7q0 -4 3.500 -4q3 0 3.500 3.500v3.500"/><rect x="9" y="9.500" width="10.500" height="6.500"/><path d="M13 12.800h2.500" stroke-width="1.500"/><circle cx="36.500" cy="10.500" r="2.200" fill="#111" stroke="none"/></svg>
<div class="t r" style="left:1628px;width:120.500px;top:689px">Z</div>
<div class="t c" style="left:1758.500px;width:100px;top:689px">1.000</div>
<svg style="left:1861px;top:688.5px" width="44" height="20" viewBox="0 0 44 20" fill="none" stroke="#3a3a3a" stroke-width="1.200"><path d="M3 7q0 -4 3.500 -4q3 0 3.500 3.500v3.500"/><rect x="9" y="9.500" width="10.500" height="6.500"/><path d="M13 12.800h2.500" stroke-width="1.500"/><circle cx="36.500" cy="10.500" r="2.200" fill="#111" stroke="none"/></svg>
<div class="t r" style="left:1628px;width:120.500px;top:721px">Rotation Mode</div>
<div class="btn dk" style="left:1759.500px;top:719px;width:100px;height:24.500px"></div>
<div class="t" style="left:1769px;top:721px;color:#e6e6e6">XYZ Euler</div>
<svg style="left:1844px;top:727px" width="12" height="10" viewBox="0 0 12 10" fill="none" stroke="#e6e6e6" stroke-width="1.600"><path d="M2 3l4 4l4 -4"/></svg>
<svg style="left:1861px;top:720.500px" width="44" height="20" viewBox="0 0 44 20"><circle cx="36.500" cy="10.500" r="2.200" fill="#111"/></svg>
<svg style="left:1649px;top:763px" width="12" height="12" viewBox="0 0 12 12"><path d="M2.500 1.500v9l7 -4.500z" fill="#3c3c3c"/></svg>
<div class="t" style="left:1667px;top:759px">Delta Transform</div>
<div class="a" style="left:1623px;top:783px;width:291px;height:211px;background:#c1c1c1"></div>
<svg style="left:1632px;top:793.5px" width="12" height="12" viewBox="0 0 12 12"><path d="M2.500 1.500v9l7.500 -4.500z" fill="#3c3c3c"/></svg>
<div class="t" style="left:1650px;top:789.5px;font-size:16px">Relations</div>
<svg style="left:1893px;top:795.5px" width="18" height="8" viewBox="0 0 18 8" fill="#f2f2f2"><path d="M0 1h2v2h-2zM4 1h2v2h-2zM8 1h2v2h-2zM12 1h2v2h-2zM0 5h2v2h-2zM4 5h2v2h-2zM8 5h2v2h-2zM12 5h2v2h-2z" transform="translate(1.500 0)"/></svg>
<svg style="left:1632px;top:823.5px" width="12" height="12" viewBox="0 0 12 12"><path d="M2.500 1.500v9l7.500 -4.500z" fill="#3c3c3c"/></svg>
<div class="t" style="left:1650px;top:819.5px;font-size:16px">Collections</div>
<svg style="left:1893px;top:825.5px" width="18" height="8" viewBox="0 0 18 8" fill="#f2f2f2"><path d="M0 1h2v2h-2zM4 1h2v2h-2zM8 1h2v2h-2zM12 1h2v2h-2zM0 5h2v2h-2zM4 5h2v2h-2zM8 5h2v2h-2zM12 5h2v2h-2z" transform="translate(1.500 0)"/></svg>
<svg style="left:1632px;top:853.5px" width="12" height="12" viewBox="0 0 12 12"><path d="M2.500 1.500v9l7.500 -4.500z" fill="#3c3c3c"/></svg>
<div class="t" style="left:1650px;top:849.5px;font-size:16px">Instancing</div>
<svg style="left:1893px;top:855.5px" width="18" height="8" viewBox="0 0 18 8" fill="#f2f2f2"><path d="M0 1h2v2h-2zM4 1h2v2h-2zM8 1h2v2h-2zM12 1h2v2h-2zM0 5h2v2h-2zM4 5h2v2h-2zM8 5h2v2h-2zM12 5h2v2h-2z" transform="translate(1.500 0)"/></svg>
<svg style="left:1632px;top:883.5px" width="12" height="12" viewBox="0 0 12 12"><path d="M2.500 1.500v9l7.500 -4.500z" fill="#3c3c3c"/></svg>
<div class="t" style="left:1650px;top:879.5px;font-size:16px">Motion Paths</div>
<svg style="left:1893px;top:885.5px" width="18" height="8" viewBox="0 0 18 8" fill="#f2f2f2"><path d="M0 1h2v2h-2zM4 1h2v2h-2zM8 1h2v2h-2zM12 1h2v2h-2zM0 5h2v2h-2zM4 5h2v2h-2zM8 5h2v2h-2zM12 5h2v2h-2z" transform="translate(1.500 0)"/></svg>
<svg style="left:1632px;top:913.5px" width="12" height="12" viewBox="0 0 12 12"><path d="M2.500 1.500v9l7.500 -4.500z" fill="#3c3c3c"/></svg>
<div class="t" style="left:1650px;top:909.5px;font-size:16px">Visibility</div>
<svg style="left:1893px;top:915.5px" width="18" height="8" viewBox="0 0 18 8" fill="#f2f2f2"><path d="M0 1h2v2h-2zM4 1h2v2h-2zM8 1h2v2h-2zM12 1h2v2h-2zM0 5h2v2h-2zM4 5h2v2h-2zM8 5h2v2h-2zM12 5h2v2h-2z" transform="translate(1.500 0)"/></svg>
<svg style="left:1632px;top:943.5px" width="12" height="12" viewBox="0 0 12 12"><path d="M2.500 1.500v9l7.500 -4.500z" fill="#3c3c3c"/></svg>
<div class="t" style="left:1650px;top:939.5px;font-size:16px">Viewport Display</div>
<svg style="left:1893px;top:945.5px" width="18" height="8" viewBox="0 0 18 8" fill="#f2f2f2"><path d="M0 1h2v2h-2zM4 1h2v2h-2zM8 1h2v2h-2zM12 1h2v2h-2zM0 5h2v2h-2zM4 5h2v2h-2zM8 5h2v2h-2zM12 5h2v2h-2z" transform="translate(1.500 0)"/></svg>
<svg style="left:1632px;top:973.5px" width="12" height="12" viewBox="0 0 12 12"><path d="M2.500 1.500v9l7.500 -4.500z" fill="#3c3c3c"/></svg>
<div class="t" style="left:1650px;top:969.5px;font-size:16px">Custom Properties</div>
<svg style="left:1893px;top:975.5px" width="18" height="8" viewBox="0 0 18 8" fill="#f2f2f2"><path d="M0 1h2v2h-2zM4 1h2v2h-2zM8 1h2v2h-2zM12 1h2v2h-2zM0 5h2v2h-2zM4 5h2v2h-2zM8 5h2v2h-2zM12 5h2v2h-2z" transform="translate(1.500 0)"/></svg>
<div class="a" style="left:1590px;top:408px;width:33px;height:36px;background:#919191;border-radius:5px 0 0 5px"></div>
<div class="a" style="left:1590px;top:454px;width:33px;height:33px;background:#919191;border-radius:5px 0 0 5px"></div>
<div class="a" style="left:1590px;top:489px;width:33px;height:33px;background:#919191;border-radius:5px 0 0 5px"></div>
<div class="a" style="left:1590px;top:524px;width:33px;height:33px;background:#919191;border-radius:5px 0 0 5px"></div>
<div class="a" style="left:1590px;top:559px;width:33px;height:33px;background:#919191;border-radius:5px 0 0 5px"></div>
<div class="a" style="left:1590px;top:595px;width:33px;height:32px;background:#919191;border-radius:5px 0 0 5px"></div>
<div class="a" style="left:1590px;top:637.5px;width:33px;height:33.5px;background:#b4b4b4;border-radius:5px 0 0 5px"></div>
<div class="a" style="left:1590px;top:673px;width:33px;height:33px;background:#919191;border-radius:5px 0 0 5px"></div>
<div class="a" style="left:1590px;top:708px;width:33px;height:33px;background:#919191;border-radius:5px 0 0 5px"></div>
<div class="a" style="left:1590px;top:743px;width:33px;height:33px;background:#919191;border-radius:5px 0 0 5px"></div>
<div class="a" style="left:1590px;top:778px;width:33px;height:33px;background:#919191;border-radius:5px 0 0 5px"></div>
<div class="a" style="left:1590px;top:813px;width:33px;height:33px;background:#919191;border-radius:5px 0 0 5px"></div>
<div class="a" style="left:1590px;top:848px;width:33px;height:33px;background:#919191;border-radius:5px 0 0 5px"></div>
<div class="a" style="left:1590px;top:890px;width:33px;height:35px;background:#919191;border-radius:5px 0 0 5px"></div>
<svg style="left:0;top:0" width="1920" height="1080" viewBox="0 0 1920 1080"><g transform="translate(1596 415)"><g fill="#dcdcdc"><rect x="4" y="2" width="1.600" height="8"/><path d="M2.500 11h4.500v4.500q-2.200 2 -4.500 0z"/><path d="M11.500 2v4.500l2.500 2l2.500 -2V2l2.500 1.500v5l-3.500 2.500v9h-3v-9l-3.500 -2.500v-5z"/></g></g><g transform="translate(1596 458)"><g fill="none" stroke="#dcdcdc" stroke-width="1.500"><rect x="3" y="7" width="16" height="11.500"/><path d="M7 7V4h6v3"/><path d="M5.500 10.500h8M5.500 14.500h8" stroke-width="1.200"/><path d="M16 10v6" stroke-dasharray="1.500 1.500" stroke-width="1.600"/></g></g><g transform="translate(1596 494)"><g fill="#dcdcdc"><rect x="3" y="3.500" width="16" height="5" rx="1"/></g><g fill="none" stroke="#dcdcdc" stroke-width="1.400"><rect x="5.500" y="10" width="11" height="9"/><path d="M7 18l3 -4.500l2 2.500l1.500 -2l2 4" fill="#dcdcdc"/></g></g><g transform="translate(1596 529)"><g fill="none" stroke="#dcdcdc" stroke-width="1.300"><rect x="8" y="3" width="11.500" height="11"/><path d="M9 13l3.500 -5.500l3 4l1.500 -2l2 3.500z" fill="#dcdcdc"/><path d="M5.500 6v10.500h11M3 8.500V19h11" stroke="#d8d8d8"/></g></g><g transform="translate(1596 564)"><g fill="#dcdcdc"><path d="M8 3l3.500 8.500q.5 4 -3.500 4.500q-4 -.5 -3.500 -4.500z"/><circle cx="17" cy="5.500" r="2.400"/></g><circle cx="14" cy="14.500" r="4.300" fill="#bbb" stroke="#dcdcdc" stroke-width="1.400"/></g><g transform="translate(1596 599)"><g fill="none" stroke="#1c1c1c" stroke-width="1.500"><circle cx="11" cy="11.500" r="7.500"/><path d="M6 7.500q3 -.5 4 2q-.5 3 2.500 3.500q1 3 -1.500 5M13 4.500q1 3 4.500 3" stroke-width="2.200"/><path d="M3 5.500a10 10 0 0 1 4 -3.500M19 17.500a10 10 0 0 1 -4 3.500" stroke-width="1.300"/></g></g><g transform="translate(1596 643)"><g fill="none" stroke="#000" stroke-width="1.400"><rect x="6" y="6.500" width="10" height="10" fill="#000" stroke="none"/><path d="M2 7V2.500h4.500M15.500 2.500H20V7M20 16v4.500h-4.500M6.500 20.500H2V16"/></g></g><g transform="translate(1596 679)"><path d="M17.500 2.500a5 5 0 0 0 -6 6.500l-8.500 8.500a2 2 0 0 0 3 3l8.500 -8.500a5 5 0 0 0 6.500 -6l-3 3l-3 -1l-1 -3z" fill="#1c1c1c"/></g><g transform="translate(1596 714)"><g fill="#1c1c1c"><circle cx="4.500" cy="4.500" r="2.400"/><circle cx="4.500" cy="18" r="1.800"/><circle cx="17.500" cy="17.500" r="1.800"/><circle cx="17" cy="5.500" r="1.400"/></g><path d="M4.500 5v12M6 6l10.500 10.500M7 4.500h9" stroke="#1c1c1c" stroke-width="1.200" fill="none"/></g><g transform="translate(1596 749)"><circle cx="10.500" cy="12" r="7" fill="none" stroke="#1c1c1c" stroke-width="1.500"/><circle cx="10.500" cy="12" r="3" fill="#1c1c1c"/><circle cx="18" cy="5" r="2" fill="#1c1c1c"/></g><g transform="translate(1596 784)"><g fill="none" stroke="#1c1c1c" stroke-width="1.500"><path d="M2.500 14.500q1 -7 8.500 -10.500q6 -2.500 8 1q1.500 4 -4.500 8q-3 2 -5.500 5.500q-3.500 2 -6 -.5q-1 -1.500 -.5 -3.500z"/><circle cx="8" cy="13.500" r="3.300"/><circle cx="8" cy="13.500" r=".8" fill="#1c1c1c"/></g></g><g transform="translate(1596 818)"><g fill="none" stroke="#1c1c1c" stroke-width="1.400"><path d="M4.500 5h13l-6.500 12.500z"/><rect x="2.500" y="3" width="4" height="4" fill="#919191"/><rect x="15.500" y="3" width="4" height="4" fill="#919191"/><rect x="9" y="15.500" width="4" height="4" fill="#919191"/></g></g><g transform="translate(1596 853)"><circle cx="11" cy="11.500" r="8" fill="none" stroke="#1c1c1c" stroke-width="1.500"/><path d="M11 3.500a8 8 0 0 0 -8 8h8zM11 11.500h8a8 8 0 0 1 -8 8z" fill="#1c1c1c"/></g><g transform="translate(1596 897)"><g fill="#1c1c1c"><rect x="2" y="2.500" width="18" height="18" fill="#e0e0e0"/><path d="M2 2.500h4.500v4.500H2zM11 2.500h4.500v4.500H11zM6.500 7h4.500v4.500H6.500zM15.500 7H20v4.500h-4.500zM2 11.500h4.500V16H2zM11 11.500h4.500V16H11zM6.500 16h4.500v4.500H6.500zM15.500 16H20v4.500h-4.500z"/></g></g></svg>
<!-- timeline -->
<div class="a" style="left:1px;top:934.500px;width:1584px;height:68.500px;background:#2f2f2f;border-radius:5px;overflow:hidden"><div class="a" style="left:0;top:0;width:1584px;height:30.500px;background:#a4a4a4"></div><div class="a" style="left:0;top:30.500px;width:1584px;height:24px;background:#2f2f2f"></div><div class="a" style="left:9px;top:55px;width:1566px;height:12.500px;border-radius:6px;background:linear-gradient(#757575,#8c8c8c 30%,#999 60%,#979797)"></div></div>
<div class="btn dk" style="left:10px;top:938px;width:39.500px;height:24.500px"></div>
<svg style="left:13px;top:939px" width="36" height="22" viewBox="0 0 36 22" fill="none" stroke="#e6e6e6" stroke-width="1.400"><circle cx="11.500" cy="11" r="8" fill="#e8e8e8" stroke="none"/><path d="M13.500 5.500L8.500 11l5 5" stroke="#464646" stroke-width="2.200"/><path d="M24.500 9.500l3.500 3.500l3.500 -3.500" stroke-width="1.600"/></svg>
<div class="btn dk" style="left:56.500px;top:938px;width:162.500px;height:24.500px"></div>
<div class="a" style="left:143.500px;top:938px;width:1px;height:24.500px;background:#3c3c3c"></div>
<div class="t" style="left:66px;top:940px;color:#e6e6e6">Playback</div>
<svg style="left:129px;top:946px" width="12" height="10" viewBox="0 0 12 10" fill="none" stroke="#e6e6e6" stroke-width="1.600"><path d="M2 3l4 4l4 -4"/></svg>
<div class="t" style="left:153px;top:940px;color:#e6e6e6">Keying</div>
<svg style="left:204px;top:946px" width="12" height="10" viewBox="0 0 12 10" fill="none" stroke="#e6e6e6" stroke-width="1.600"><path d="M2 3l4 4l4 -4"/></svg>
<div class="t" style="left:228px;top:940px">View</div>
<div class="t" style="left:278px;top:940px">Marker</div>
<div class="btn" style="left:689.500px;top:938px;width:24px;height:24.500px;background:#b0b0b0"></div>
<div class="btn" style="left:720.500px;top:938px;width:149px;height:24.500px;background:#d2d2d2"></div>
<div class="a" style="left:745.35px;top:938px;width:1px;height:24.500px;background:#bcbcbc"></div>
<div class="a" style="left:770.2px;top:938px;width:1px;height:24.500px;background:#bcbcbc"></div>
<div class="a" style="left:795.05px;top:938px;width:1px;height:24.500px;background:#bcbcbc"></div>
<div class="a" style="left:819.9px;top:938px;width:1px;height:24.500px;background:#bcbcbc"></div>
<div class="a" style="left:844.75px;top:938px;width:1px;height:24.500px;background:#bcbcbc"></div>
<svg style="left:689.500px;top:938px" width="182" height="25" viewBox="0 0 182 25" fill="#0a0a0a"><circle cx="12" cy="12.500" r="4.600"/><g transform="translate(31 0)"><rect x="6" y="6.500" width="2" height="12"/><path d="M17.500 6.500v12l-8.500 -6z"/><path d="M32.500 6.500l5 6l-5 6l-5 -6zM44.500 7.500v10l-6.500 -5z"/><path d="M68 5.500v14l-11.500 -7z"/><path d="M81 5.500v14l11.500 -7z"/><path d="M116 6.500l5 6l-5 6l-5 -6zM104 7.500v10l6.500 -5z"/><path d="M131 6.500v12l8.500 -6z"/><rect x="140" y="6.500" width="2" height="12"/></g></svg>
<div class="btn c" style="left:1221px;top:938px;width:92px;height:24.500px;background:#d3d3d3;line-height:23px">1</div>
<div class="btn" style="left:1320px;top:938px;width:25px;height:24.500px;background:#aaa;border-radius:5px 0 0 5px"></div>
<svg style="left:1321px;top:938px" width="24" height="25" viewBox="0 0 24 25" fill="none" stroke="#111" stroke-width="1.400"><circle cx="11.500" cy="14" r="7"/><path d="M11.500 9.500V14h3.500M9 4.500h5M11.500 4.500V7M17 7.500l1.500 -1.500"/></svg>
<div class="a" style="left:1345px;top:938px;width:217.500px;height:24.500px;background:#d3d3d3;border-radius:0 5px 5px 0"></div>
<div class="a" style="left:1456px;top:938px;width:1px;height:24.500px;background:#bcbcbc"></div>
<div class="t" style="left:1364px;top:940px">Start:</div><div class="t" style="left:1430px;top:940px">1</div>
<div class="t" style="left:1476px;top:940px">End:</div><div class="t" style="left:1520px;top:940px">250</div>
<div class="t c" style="left:86.037px;top:969.500px;width:50px;color:#d0d0d0">10</div>
<div class="t c" style="left:144.967px;top:969.500px;width:50px;color:#d0d0d0">20</div>
<div class="t c" style="left:203.897px;top:969.500px;width:50px;color:#d0d0d0">30</div>
<div class="t c" style="left:262.827px;top:969.500px;width:50px;color:#d0d0d0">40</div>
<div class="t c" style="left:321.757px;top:969.500px;width:50px;color:#d0d0d0">50</div>
<div class="t c" style="left:380.687px;top:969.500px;width:50px;color:#d0d0d0">60</div>
<div class="t c" style="left:439.617px;top:969.500px;width:50px;color:#d0d0d0">70</div>
<div class="t c" style="left:498.547px;top:969.500px;width:50px;color:#d0d0d0">80</div>
<div class="t c" style="left:557.477px;top:969.500px;width:50px;color:#d0d0d0">90</div>
<div class="t c" style="left:616.407px;top:969.500px;width:50px;color:#d0d0d0">100</div>
<div class="t c" style="left:675.337px;top:969.500px;width:50px;color:#d0d0d0">110</div>
<div class="t c" style="left:734.267px;top:969.500px;width:50px;color:#d0d0d0">120</div>
<div class="t c" style="left:793.197px;top:969.500px;width:50px;color:#d0d0d0">130</div>
<div class="t c" style="left:852.127px;top:969.500px;width:50px;color:#d0d0d0">140</div>
<div class="t c" style="left:911.057px;top:969.500px;width:50px;color:#d0d0d0">150</div>
<div class="t c" style="left:969.987px;top:969.500px;width:50px;color:#d0d0d0">160</div>
<div class="t c" style="left:1028.92px;top:969.500px;width:50px;color:#d0d0d0">170</div>
<div class="t c" style="left:1087.85px;top:969.500px;width:50px;color:#d0d0d0">180</div>
<div class="t c" style="left:1146.78px;top:969.500px;width:50px;color:#d0d0d0">190</div>
<div class="t c" style="left:1205.71px;top:969.500px;width:50px;color:#d0d0d0">200</div>
<div class="t c" style="left:1264.64px;top:969.500px;width:50px;color:#d0d0d0">210</div>
<div class="t c" style="left:1323.57px;top:969.500px;width:50px;color:#d0d0d0">220</div>
<div class="t c" style="left:1382.5px;top:969.500px;width:50px;color:#d0d0d0">230</div>
<div class="t c" style="left:1441.43px;top:969.500px;width:50px;color:#d0d0d0">240</div>
<div class="t c" style="left:1500.36px;top:969.500px;width:50px;color:#d0d0d0">250</div>
<div class="a c" style="left:43px;top:968.500px;width:31.500px;height:21.500px;border-radius:5px;background:#5bb83b;color:#fff;line-height:21px">1</div>
<div class="a" style="left:58px;top:990px;width:1px;height:12px;background:#7fbf6a"></div>
<svg style="left:1px;top:986px" width="12" height="14" viewBox="0 0 12 14" fill="none" stroke="#999" stroke-width="1.300"><path d="M2 3l3.500 4l-3.500 4"/></svg>
<svg style="left:1574px;top:986px" width="12" height="14" viewBox="0 0 12 14" fill="none" stroke="#999" stroke-width="1.300"><path d="M8 3l-3.500 4l3.500 4"/></svg>
<!-- status bar -->
<div class="a" style="left:0;top:1005px;width:1920px;height:25px;background:#adadad"></div>
<svg style="left:12px;top:1005.500px" width="24" height="25" viewBox="0 0 24 25" fill="none" stroke="#1a1a1a" stroke-width="1.300"><rect x="3.200" y="3.500" width="12.200" height="18.200" rx="4.600"/><path d="M3.700 11.800V7.500q0 -3.800 3.800 -3.800h2v8.100z" fill="#1a1a1a" stroke="none"/></svg>
<div class="t" style="left:42px;top:1007px">Select</div>
<svg style="left:92px;top:1005.500px" width="24" height="25" viewBox="0 0 24 25" fill="none" stroke="#1a1a1a" stroke-width="1.300"><rect x="3.200" y="3.500" width="12.200" height="18.200" rx="4.600"/><path d="M3.700 11.800V7.500q0 -3.800 3.800 -3.800h2v8.100z" fill="#1a1a1a" stroke="none"/></svg>
<svg style="left:108px;top:1005.500px" width="10" height="22" viewBox="0 0 10 22" fill="none" stroke="#1a1a1a" stroke-width="1.300"><path d="M2.500 2.500v7.500M5.600 4.500v8"/></svg>
<div class="t" style="left:124px;top:1007px">Box Select</div>
<svg style="left:324.5px;top:1005.500px" width="24" height="25" viewBox="0 0 24 25" fill="none" stroke="#1a1a1a" stroke-width="1.300"><rect x="3.200" y="3.500" width="12.200" height="18.200" rx="4.600"/><rect x="7.600" y="5" width="3.400" height="6.500" rx="1.500" fill="#1a1a1a" stroke="none"/></svg>
<div class="t" style="left:353px;top:1007px">Rotate View</div>
<svg style="left:634.5px;top:1005.500px" width="24" height="25" viewBox="0 0 24 25" fill="none" stroke="#1a1a1a" stroke-width="1.300"><rect x="3.200" y="3.500" width="12.200" height="18.200" rx="4.600"/><path d="M9.300 3.700h1.700q3.800 0 3.800 3.800v4.300h-5.500z" fill="#1a1a1a" stroke="none"/></svg>
<div class="t" style="left:664px;top:1007px">Object Context Menu</div>
<div class="t r" style="left:1283px;width:600px;top:1007px">Collection | Cube | Verts:8 | Faces:6 | Tris:12 | Objects:1/3 | Mem: 22.7 MB | v2.80.75</div>
<!-- windows taskbar -->
<div class="a" style="left:0;top:1030px;width:1920px;height:50px;background:#222"></div>
<svg style="left:20px;top:1045px" width="20" height="20" viewBox="0 0 20 20" fill="#fff"><path d="M0 2.800L8.200 1.700V9.500H0zM9.200 1.500L20 0V9.500H9.200zM0 10.500h8.200v7.800L0 17.200zM9.200 10.500H20V20L9.200 18.500z"/></svg>
<div class="a" style="left:60px;top:1030px;width:430px;height:50px;background:#f2f2f2"></div>
<svg style="left:70px;top:1040px" width="30" height="30" viewBox="0 0 30 30"><circle cx="15" cy="15" r="10.500" fill="none" stroke="#111" stroke-width="3"/></svg>
<div class="t w" style="left:110px;top:1044px;font-size:17.400px;color:#3c3c3c;line-height:22px;height:22px">Taper ici pour rechercher</div>
<svg style="left:454px;top:1043px" width="20" height="24" viewBox="0 0 20 24" fill="none" stroke="#222" stroke-width="1.400"><rect x="7" y="2" width="6" height="12" rx="3"/><path d="M4 10.500v1.500a6 6 0 0 0 12 0v-1.500M10 18v3.500M6.500 21.500h7"/></svg>
<!-- running indicators -->
<div class="a" style="left:499px;top:1077px;width:47px;height:3px;background:#76b9ed"></div>
<div class="a" style="left:731px;top:1077px;width:36px;height:3px;background:#76b9ed"></div><div class="a" style="left:768px;top:1077px;width:9px;height:3px;background:#5a93c0"></div>
<div class="a" style="left:1411px;top:1030px;width:56px;height:50px;background:#4b4b4b"></div>
<div class="a" style="left:1411px;top:1077px;width:56px;height:3px;background:#76b9ed"></div>
<svg style="left:0;top:1030px" width="1920" height="50" viewBox="0 1030 1920 50" font-family="Liberation Sans,sans-serif">
 <!-- explorer -->
 <path d="M508 1043h9l2 2.500h16v20h-27z" fill="#f3c64b"/><path d="M508 1049h27v17h-27z" fill="#fbe08a"/><path d="M513 1056h17v10h-17z" fill="#3f9be0"/><path d="M517 1061h9v5h-9z" fill="#fbe08a"/>
 <!-- filezilla -->
 <rect x="566" y="1039.800" width="29" height="30.400" fill="#b40000"/><rect x="568" y="1041.800" width="25" height="26.400" fill="#c81414"/><text x="580" y="1064" font-size="25" font-weight="bold" font-style="italic" fill="#fff" text-anchor="middle" textLength="22" lengthAdjust="spacingAndGlyphs">Fz</text>
 <!-- steam -->
 <defs><linearGradient id="stg" x1="0" y1="0" x2="0" y2="1"><stop offset="0" stop-color="#11204a"/><stop offset=".55" stop-color="#15356a"/><stop offset="1" stop-color="#1d7fc4"/></linearGradient></defs><circle cx="638" cy="1054.500" r="14.300" fill="url(#stg)"/><path d="M624.500 1052l9 4a3.800 3.800 0 0 1 3.500 -.5l4 -5.500a5.500 5.500 0 1 1 5.500 5.500l-5.500 4a4 4 0 0 1 -7.800 .800l-8.500 -3.500z" fill="#fff"/><circle cx="646.500" cy="1050" r="3.300" fill="#14305c"/><circle cx="646.500" cy="1050" r="2" fill="#fff"/><circle cx="636.500" cy="1060" r="2.500" fill="#14305c"/>
 <!-- epic -->
 <path d="M683 1040h25v24l-12.500 5l-12.500 -5z" fill="#0a0a0a"/><text x="695.500" y="1056" font-size="14" font-weight="bold" fill="#fff" text-anchor="middle" textLength="19" lengthAdjust="spacingAndGlyphs">EPIC</text><text x="695.500" y="1062.300" font-size="4.600" font-weight="bold" fill="#fff" text-anchor="middle" textLength="16.500" lengthAdjust="spacingAndGlyphs">GAMES</text><path d="M691.500 1065.500h8l-4 1.800z" fill="#fff"/>
 <!-- chrome -->
 <circle cx="753.500" cy="1054.800" r="13.800" fill="#e04a3a"/><path d="M753.500 1054.800L741.550 1047.900A13.800 13.800 0 0 0 746.600 1066.750z" fill="#1da261"/><path d="M741.550 1047.900a13.800 13.800 0 0 0 5.600 19.200l6.350 -12.300z" fill="#1da261"/><path d="M753.500 1048.300h12.200a13.800 13.800 0 0 1 -18.900 18.600l6.700 -12.100z" fill="#fcd03d"/><circle cx="753.500" cy="1054.800" r="6.400" fill="#f1f1f1"/><circle cx="753.500" cy="1054.800" r="5" fill="#4a8af4"/>
 <!-- tor -->
 <defs><radialGradient id="torg" cx=".3" cy=".25" r=".9"><stop offset="0" stop-color="#9a2fe0"/><stop offset=".6" stop-color="#6a169a"/><stop offset="1" stop-color="#40105e"/></radialGradient></defs>
 <circle cx="811" cy="1054.500" r="14" fill="url(#torg)"/><g fill="none" stroke="#e7a8ff" stroke-width="2"><path d="M811 1044.300a10.200 10.200 0 0 1 0 20.400"/><path d="M811 1048.300a6.200 6.200 0 0 1 0 12.400"/></g><path d="M811 1052a2.500 2.500 0 0 1 0 5z" fill="#e7a8ff"/>
 <!-- calculator -->
 <rect x="858" y="1040.500" width="21.500" height="28.500" rx="1.500" fill="#fff" stroke="#fff" stroke-width="1"/><rect x="861" y="1043.500" width="15.500" height="4.500" fill="#222"/><g fill="#222"><path d="M861 1051h3.300v3.300H861zM867 1051h3.300v3.300H867zM873 1051h3.300v3.300H873zM861 1056.500h3.300v3.300H861zM867 1056.500h3.300v3.300H867zM873 1056.500h3.300v3.300H873zM861 1062h3.300v3.300H861zM867 1062h3.300v3.300H867zM873 1062h3.300v3.300H873z"/></g>
 <!-- notepad -->
 <defs><linearGradient id="npg" x1="0" y1="0" x2="1" y2=".3"><stop offset="0" stop-color="#6cc0d8"/><stop offset=".55" stop-color="#a8dcea"/><stop offset="1" stop-color="#f4fbfd"/></linearGradient></defs>
 <path d="M920.600 1041.500L937.900 1045.500L936.100 1065L932.100 1067.500L912.600 1062.300L912.200 1057.500z" fill="url(#npg)"/><path d="M920.600 1041.500L912.200 1057.500L912.600 1062.300L917.900 1060.600L923.700 1043.700z" fill="#2f8fab"/><path d="M934.500 1046.500l3.400 -1l-1.800 19.500l-4 2.500z" fill="#f6f6f0"/>
 <!-- blank doc -->
 <path d="M971.500 1040.200h13.800l9.700 8.400v19.500h-23.500z" fill="#e6e6e6"/><path d="M985.300 1040.200l9.700 8.400h-9.700z" fill="#6e6e6e"/><path d="M971.500 1040.200h5v27.900h-5z" fill="#fff" opacity=".55"/>
 <!-- pi3 -->
 <circle cx="1040" cy="1054.500" r="13.500" fill="#0a0a0a" stroke="#e6e6e6" stroke-width="1.400"/><text x="1037" y="1062" font-size="17" font-family="Liberation Serif,serif" fill="#fff" text-anchor="middle">1</text><text x="1045" y="1058" font-size="15" font-family="Liberation Serif,serif" fill="#fff" text-anchor="middle">3</text>
 <!-- audacity -->
 <path d="M1084.500 1061v-7a12.500 12.500 0 0 1 25 0v7" fill="none" stroke="#0a0ae0" stroke-width="4.500"/><ellipse cx="1085.500" cy="1058.500" rx="4" ry="7" fill="#0a0ae0"/><ellipse cx="1108.500" cy="1058.500" rx="4" ry="7" fill="#0a0ae0"/><ellipse cx="1096.800" cy="1058" rx="8" ry="8.800" fill="#f2c21a"/><ellipse cx="1096.800" cy="1058.500" rx="7.600" ry="3.600" fill="#e8401a"/><path d="M1089.500 1058.500h14.500" stroke="#e01010" stroke-width="2.400"/>
 <!-- vlc -->
 <path d="M1153.300 1040.500q1.500 0 2.200 1.800l6.500 18.700h-17.400l6.500 -18.700q.700 -1.800 2.200 -1.800z" fill="#f28a0a"/><path d="M1150.500 1045.500h5.600l1.700 5h-9zM1147 1055.300h12.600l1.500 4.400h-15.600z" fill="#f0f0f0"/><path d="M1145 1059.800h16.600l5.400 9.200h-27.400z" fill="#f59a1a"/><path d="M1139.600 1069l1 -1.800h25.400l1 1.800z" fill="#c86a00"/>
 <!-- scanner -->
 <rect x="1196" y="1039.800" width="30.300" height="30.200" fill="#2f7de1"/><path d="M1201.500 1059.200h18.600v4.500h-18.600z M1201.500 1056h12.500v1.500h-12.500z" fill="#fff"/><path d="M1206.800 1046l13 11.700" stroke="#fff" stroke-width="1.800" fill="none"/>
 <!-- photoshop -->
 <rect x="1254" y="1041" width="27" height="27" fill="#0a1a33" stroke="#29c5f6" stroke-width="1.600"/><text x="1267.500" y="1060.500" font-size="16" font-weight="bold" fill="#29c5f6" text-anchor="middle">Ps</text>
 <!-- affinity designer -->
 <rect x="1310" y="1040" width="30" height="30" fill="#4fb8f0"/><path d="M1310 1040h13l-13 22z" fill="#1d6fc2"/><path d="M1310 1070l17 -28l8 14h-17M1318 1070l8 -14" fill="none" stroke="#134a8a" stroke-width="1.300"/>
 <!-- affinity publisher -->
 <rect x="1367" y="1040" width="30" height="30" fill="#f5794a"/><path d="M1367 1040h12l-12 20z" fill="#c8283c"/><path d="M1372 1070l16 -27M1378 1070l14 -24M1384 1070l12 -20M1390 1070l7 -12" fill="none" stroke="#fbd2a8" stroke-width="1.600"/>
 <!-- blender -->
 <g transform="translate(1424.500 1040.500) scale(1.250)"><path d="M1.500 14.500 L10 8 L4.500 8 Q3 7 4.500 6 L12 6 L9.500 3.500 Q9.500 2 11 2.200 L20 9.500 Q22.500 13 20 16.500 Q16 20.500 10.500 18.500 Q7.500 17 7 14 L4 16.500 Q2 16.500 1.500 14.500Z" fill="#f5792a"/><circle cx="14" cy="12.500" r="4.600" fill="#fff"/><circle cx="14" cy="12.500" r="2.600" fill="#265787"/></g>
 <!-- unreal -->
 <circle cx="1496" cy="1055.300" r="13.200" fill="#1a1a1a" stroke="#f0f0f0" stroke-width="1.500"/><text x="1496" y="1064" font-size="25" font-weight="bold" font-family="Liberation Serif,serif" fill="#fff" text-anchor="middle">U</text>
 <!-- cura-like C -->
 <path d="M1546.200 1040h21.900v19.700l-9.600 10.200h-20.700v-21.300z" fill="#18a4e0"/><path d="M1568.100 1059.700l-9.600 10.200h3.500l6.100 -6.500z" fill="#0b3350"/><path d="M1561 1048.200h-9.500a6 6 0 0 0 -6 5.700a6 6 0 0 0 6 5.800h9.500" fill="none" stroke="#fff" stroke-width="4.300"/>
 <!-- firefox -->
 <defs><linearGradient id="ffg" x1="0" y1="0" x2="1" y2="0"><stop offset="0" stop-color="#f5213f"/><stop offset=".5" stop-color="#ff7a16"/><stop offset="1" stop-color="#ffd21f"/></linearGradient></defs>
 <circle cx="1610" cy="1056" r="13.300" fill="url(#ffg)"/><circle cx="1609" cy="1053" r="7.200" fill="#2a5fe6"/><path d="M1603 1050q4 1.500 5 -2q3 3 1.500 6q4 2.500 8 -.5q-2 6.500 -8.500 6q-6 -1 -6 -9.500z" fill="#ff8a1a"/><path d="M1614 1041.500q7.500 3 8.800 11q-3 -5 -7 -5q1 -3.500 -1.800 -6z" fill="#ffe02a"/><path d="M1599.500 1045q-1.500 3 -.5 6l2.500 -3z" fill="#f5213f"/>
 <!-- tray -->
 <g fill="none" stroke="#fff" stroke-width="1.300"><path d="M1650 1059l7 -7l7 7"/><rect x="1679.500" y="1050.500" width="15" height="8"/><path d="M1695 1053v3" stroke-width="2"/><rect x="1681" y="1052" width="9" height="5" fill="#fff" stroke="none"/><path d="M1677 1047v3M1680 1047v3M1676 1050h5v2.500h-5z" stroke-width="1"/>
 <path d="M1706 1063a11 11 0 0 1 11 -11M1709.500 1063a7.500 7.500 0 0 1 7.500 -7.500M1713 1063a4 4 0 0 1 4 -4" stroke-width="1.400"/><circle cx="1722" cy="1062" r="1.500" fill="#fff" stroke="none"/><path d="M1718 1049a13 13 0 0 1 6 2" />
 <path d="M1738 1052.500h3l4 -3.500v12l-4 -3.500h-3z"/><path d="M1748 1052.500a4 4 0 0 1 0 5M1751 1050.500a7 7 0 0 1 0 9M1754 1048.500a10 10 0 0 1 0 13"/></g>
 <text x="1807" y="1048.500" font-size="14.200" fill="#fff" text-anchor="middle">09:41</text><text x="1807" y="1071.500" font-size="15" fill="#fff" text-anchor="middle">26/07/2019</text>
 <path d="M1870.500 1046.500h18v14h-7l-3 3.500l-2.500 -3.500h-5.500z" fill="none" stroke="#fff" stroke-width="1.400"/>
 <path d="M1914.500 1030v50" stroke="#5a5a5a" stroke-width="1"/>
</svg>
</div></body></html>
